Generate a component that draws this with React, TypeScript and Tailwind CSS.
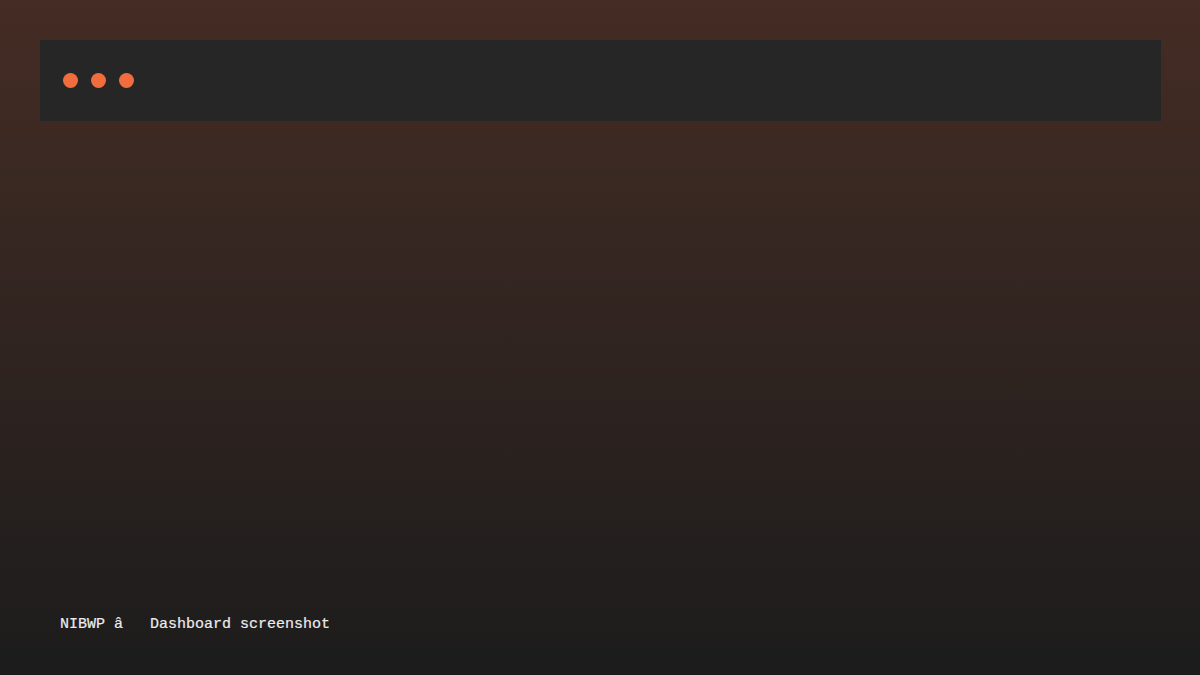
export default function App() {
  return (
    <div className="flex h-[675px] w-full flex-col bg-gradient-to-b from-[#452c24] to-[#1c1c1c] p-10">
      <div className="flex h-[81px] w-[1121px] items-center gap-[13px] bg-[#262626] px-[23px]">
        <span className="h-[15px] w-[15px] rounded-full bg-[#f26d3d]" />
        <span className="h-[15px] w-[15px] rounded-full bg-[#f26d3d]" />
        <span className="h-[15px] w-[15px] rounded-full bg-[#f26d3d]" />
      </div>
      <div className="flex-1" />
      <p className="whitespace-pre px-5 font-['Liberation_Mono',monospace] text-[15px] leading-[20px] text-[#ececec] [-webkit-text-stroke:0.2px_#ececec]">
        NIBWP â   Dashboard screenshot
      </p>
    </div>
  );
}
